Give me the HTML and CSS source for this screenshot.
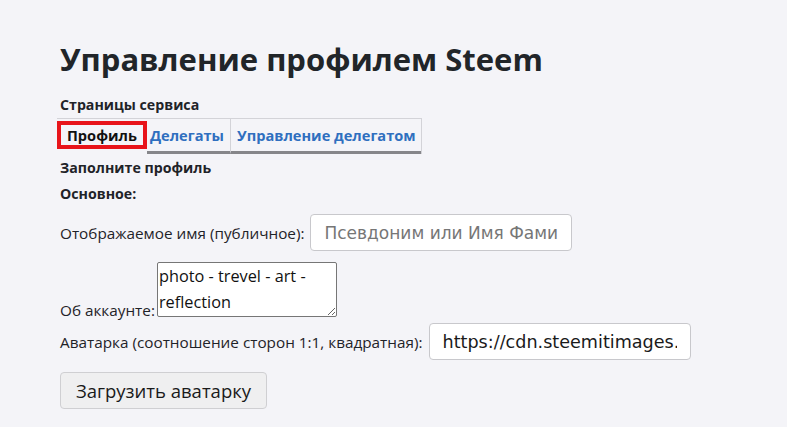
FILE: index.html
```html
<!DOCTYPE html>
<html lang="ru">
<head>
<meta charset="utf-8">
<link rel="stylesheet" href="styles.css">
</head>
<body>
<main class="page">
  <h1 class="title">Управление профилем Steem</h1>
  <div class="section-label">Страницы сервиса</div>
  <nav class="tabs">
    <span class="tab tab-active">Профиль</span>
    <a class="tab tab-next" href="#">Делегаты</a>
    <a class="tab tab-last" href="#">Управление делегатом</a>
  </nav>
  <div class="bold-line fill">Заполните профиль</div>
  <div class="bold-line basic">Основное:</div>
  <div class="row row-name">
    <label class="lbl">Отображаемое имя (публичное):</label>
    <input class="field" type="text" placeholder="Псевдоним или Имя Фамилия">
  </div>
  <div class="row row-about">
    <label class="lbl">Об аккаунте:</label>
    <textarea class="area">photo - trevel - art - reflection</textarea>
  </div>
  <div class="row row-avatar">
    <label class="lbl">Аватарка (соотношение сторон 1:1, квадратная):</label>
    <input class="field field-url" type="text" value="https://cdn.steemitimages.com/DQm">
  </div>
  <button class="btn" type="button">Загрузить аватарку</button>
</main>
</body>
</html>
```

FILE: styles.css
```css
html, body {
  margin: 0;
  padding: 0;
  background: #f4f4f8;
}
body {
  font-family: "Open Sans", "Noto Sans", sans-serif;
  color: #1f2328;
}
.page {
  padding: 34px 0 0 60px;
}
.title {
  margin: 0;
  font-size: 31px;
  font-weight: 700;
  line-height: 50px;
  color: #212529;
}
.section-label {
  margin-top: 12px;
  font-size: 14.2px;
  font-weight: 700;
  line-height: 18px;
}
.tabs {
  display: flex;
  align-items: flex-start;
  width: max-content;
  margin: 4px 0 0 -3px;
  border-top: 1px solid #d3d3d8;
  border-right: 1px solid #d3d3d8;
  height: 35px;
}
.tab {
  box-sizing: border-box;
  display: flex;
  align-items: center;
  height: 35px;
  font-size: 14.6px;
  font-weight: 700;
  color: #2f6fbf;
  text-decoration: none;
  border-bottom: 3px solid #86868a;
}
.tab-active {
  height: 28px;
  margin-top: 2px;
  padding: 0 6px 0 6px;
  color: #111;
  border: 4px solid #e8141a;
}
.tab-next {
  padding: 0 6px 0 3px;
}
.tab-last {
  padding: 0 5px 0 6px;
  border-left: 1px solid #d3d3d8;
}
.bold-line {
  font-size: 14.2px;
  font-weight: 700;
  line-height: 19px;
}
.fill { margin-top: 4px; }
.basic { margin-top: 7px; }
.row {
  display: flex;
  align-items: baseline;
  gap: 6px;
}
.row-name { margin-top: 11px; }
.row-about {
  margin-top: 11px;
  align-items: flex-end;
  gap: 2px;
}
.row-about .lbl {
  line-height: 20px;
  margin-bottom: -3px;
}
.row-avatar { margin-top: 6px; }
.lbl {
  font-size: 15.3px;
  color: #1f2328;
}
.field {
  box-sizing: border-box;
  height: 37px;
  width: 262px;
  padding: 0 13px;
  border: 1px solid #c8c8cc;
  border-radius: 4px;
  background: #fff;
  font-family: "DejaVu Sans", sans-serif;
  font-size: 17px;
  color: #1a1a1a;
}
.field-url {
  font-size: 17.6px;
}
.field::placeholder {
  color: #767676;
}
.area {
  box-sizing: border-box;
  width: 180px;
  height: 55px;
  padding: 0 1px;
  border: 1px solid #767676;
  border-radius: 2px;
  background: #fff;
  font-family: "Open Sans", sans-serif;
  font-size: 16.3px;
  line-height: 26px;
  color: #111;
  resize: vertical;
  overflow: hidden;
}
.btn {
  display: block;
  margin-top: 12px;
  box-sizing: border-box;
  height: 37px;
  width: 207px;
  border: 1px solid #cfcfd2;
  border-radius: 4px;
  background: #efeff0;
  font-family: "Open Sans", sans-serif;
  font-size: 18.5px;
  color: #1a1a1a;
  padding: 0;
}
```
